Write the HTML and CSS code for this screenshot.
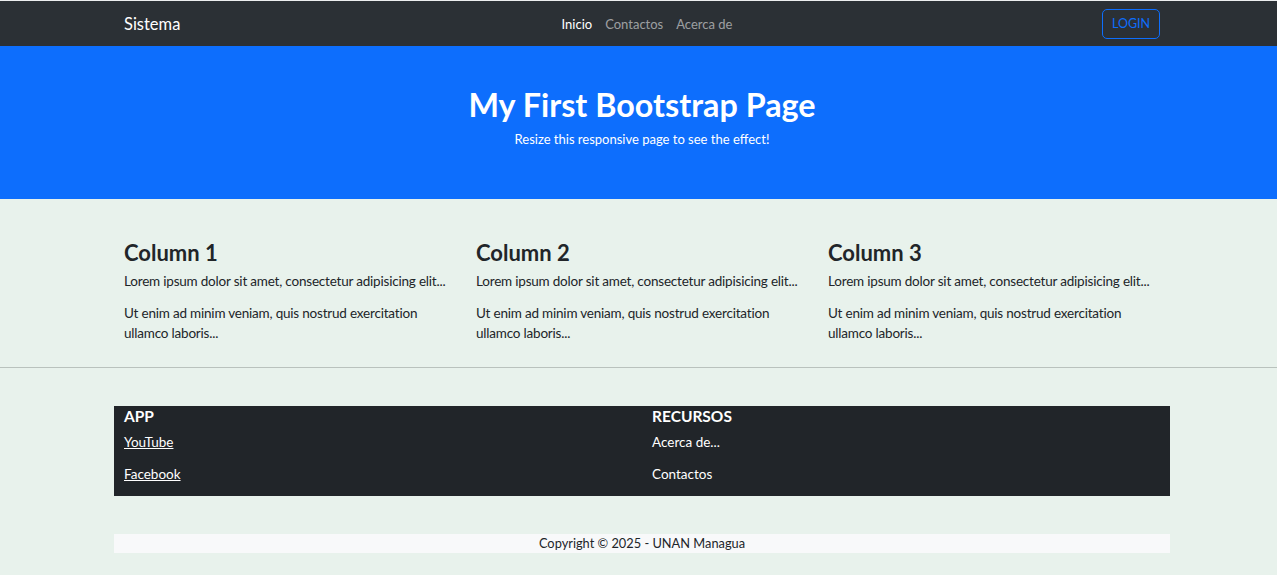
FILE: index.html
```html
<!DOCTYPE html>
<html lang="es">
<head>
<meta charset="utf-8">
<title>Sistema</title>
<link rel="stylesheet" href="styles.css">
</head>
<body>
<nav class="navbar">
  <div class="nav-inner">
    <a class="brand" href="#">Sistema</a>
    <ul class="nav-links">
      <li><a class="active" href="#">Inicio</a></li>
      <li><a href="#">Contactos</a></li>
      <li><a href="#">Acerca de</a></li>
    </ul>
    <div class="nav-right">
      <button class="btn-login" type="button">LOGIN</button>
    </div>
  </div>
</nav>

<header class="hero">
  <div class="hero-inner">
    <h1 class="hero-title">My First Bootstrap Page</h1>
    <p class="hero-sub">Resize this responsive page to see the effect!</p>
  </div>
</header>

<section class="columns">
  <div class="col">
    <h2 class="col-title">Column 1</h2>
    <p>Lorem ipsum dolor sit amet, consectetur adipisicing elit...</p>
    <p>Ut enim ad minim veniam, quis nostrud exercitation ullamco laboris...</p>
  </div>
  <div class="col">
    <h2 class="col-title">Column 2</h2>
    <p>Lorem ipsum dolor sit amet, consectetur adipisicing elit...</p>
    <p>Ut enim ad minim veniam, quis nostrud exercitation ullamco laboris...</p>
  </div>
  <div class="col">
    <h2 class="col-title">Column 3</h2>
    <p>Lorem ipsum dolor sit amet, consectetur adipisicing elit...</p>
    <p>Ut enim ad minim veniam, quis nostrud exercitation ullamco laboris...</p>
  </div>
</section>

<hr class="divider">

<footer class="footer">
  <div class="footer-col">
    <h5 class="footer-title">APP</h5>
    <p><a class="footer-link" href="#">YouTube</a></p>
    <p><a class="footer-link" href="#">Facebook</a></p>
  </div>
  <div class="footer-col">
    <h5 class="footer-title">RECURSOS</h5>
    <p>Acerca de...</p>
    <p>Contactos</p>
  </div>
</footer>

<div class="copyright">Copyright © 2025 - UNAN Managua</div>
</body>
</html>
```

FILE: styles.css
```css
* { box-sizing: border-box; }

body {
  margin: 0;
  background: #e8f2ec;
  font-family: Lato, "Noto Sans", sans-serif;
  color: #212529;
  font-size: 14px;
  border-top: 1px solid #eceeef;
}

.navbar {
  height: 45px;
  background: #2b3035;
}

.nav-inner {
  width: 1056px;
  margin-left: 114px;
  padding: 0 10px;
  height: 100%;
  display: grid;
  grid-template-columns: 1fr auto 1fr;
  align-items: center;
}

.brand {
  color: #fff;
  text-decoration: none;
  font-size: 16.5px;
  justify-self: start;
}

.nav-links {
  list-style: none;
  margin: 0 0 0 10px;
  padding: 0;
  display: flex;
}

.nav-links a {
  display: block;
  padding: 4px 6.5px;
  color: rgba(255, 255, 255, 0.55);
  text-decoration: none;
  font-size: 13px;
}

.nav-links a.active { color: #fff; }

.nav-right {
  display: flex;
  justify-content: flex-end;
}

.btn-login {
  width: 58px;
  height: 30px;
  background: transparent;
  border: 1px solid #0d6efd;
  border-radius: 5px;
  color: #0d6efd;
  font-family: inherit;
  font-size: 12.5px;
  padding: 0;
}

.hero {
  height: 153px;
  background: #0d6efd;
  color: #fff;
  padding-top: 40px;
}

.hero-inner {
  width: 1056px;
  margin-left: 114px;
  text-align: center;
}

.hero-title {
  margin: 0;
  font-size: 32.3px;
  font-weight: 700;
  line-height: 38px;
}

.hero-sub {
  margin: 5px 0 0;
  font-size: 13px;
  line-height: 20px;
}

.columns {
  width: 1056px;
  margin-left: 114px;
  padding-top: 39px;
  display: grid;
  grid-template-columns: repeat(3, 1fr);
}

.col { padding: 0 10px; }

.col-title {
  margin: 0 0 5px;
  font-size: 22px;
  font-weight: 700;
  line-height: 29px;
}

.col p {
  margin: 0 0 12.5px;
  font-size: 13.5px;
  letter-spacing: -0.2px;
  line-height: 19.5px;
}

.divider {
  margin: 11px 0 0;
  border: 0;
  border-top: 1px solid #b9c2bd;
}

.footer {
  width: 1056px;
  margin: 38px 0 0 114px;
  background: #212529;
  color: #fff;
  display: grid;
  grid-template-columns: 1fr 1fr;
}

.footer-col { padding: 0 10px; }

.footer-title {
  margin: 0 0 6px;
  font-size: 15.5px;
  font-weight: 700;
  line-height: 20px;
}

.footer-col p {
  margin: 0 0 12px;
  font-size: 13.5px;
  line-height: 20px;
}

.footer-link { color: #fff; }

.copyright {
  width: 1056px;
  margin: 38px 0 0 114px;
  height: 19px;
  background: #f8f9fa;
  text-align: center;
  font-size: 12.8px;
  line-height: 19px;
}
```
